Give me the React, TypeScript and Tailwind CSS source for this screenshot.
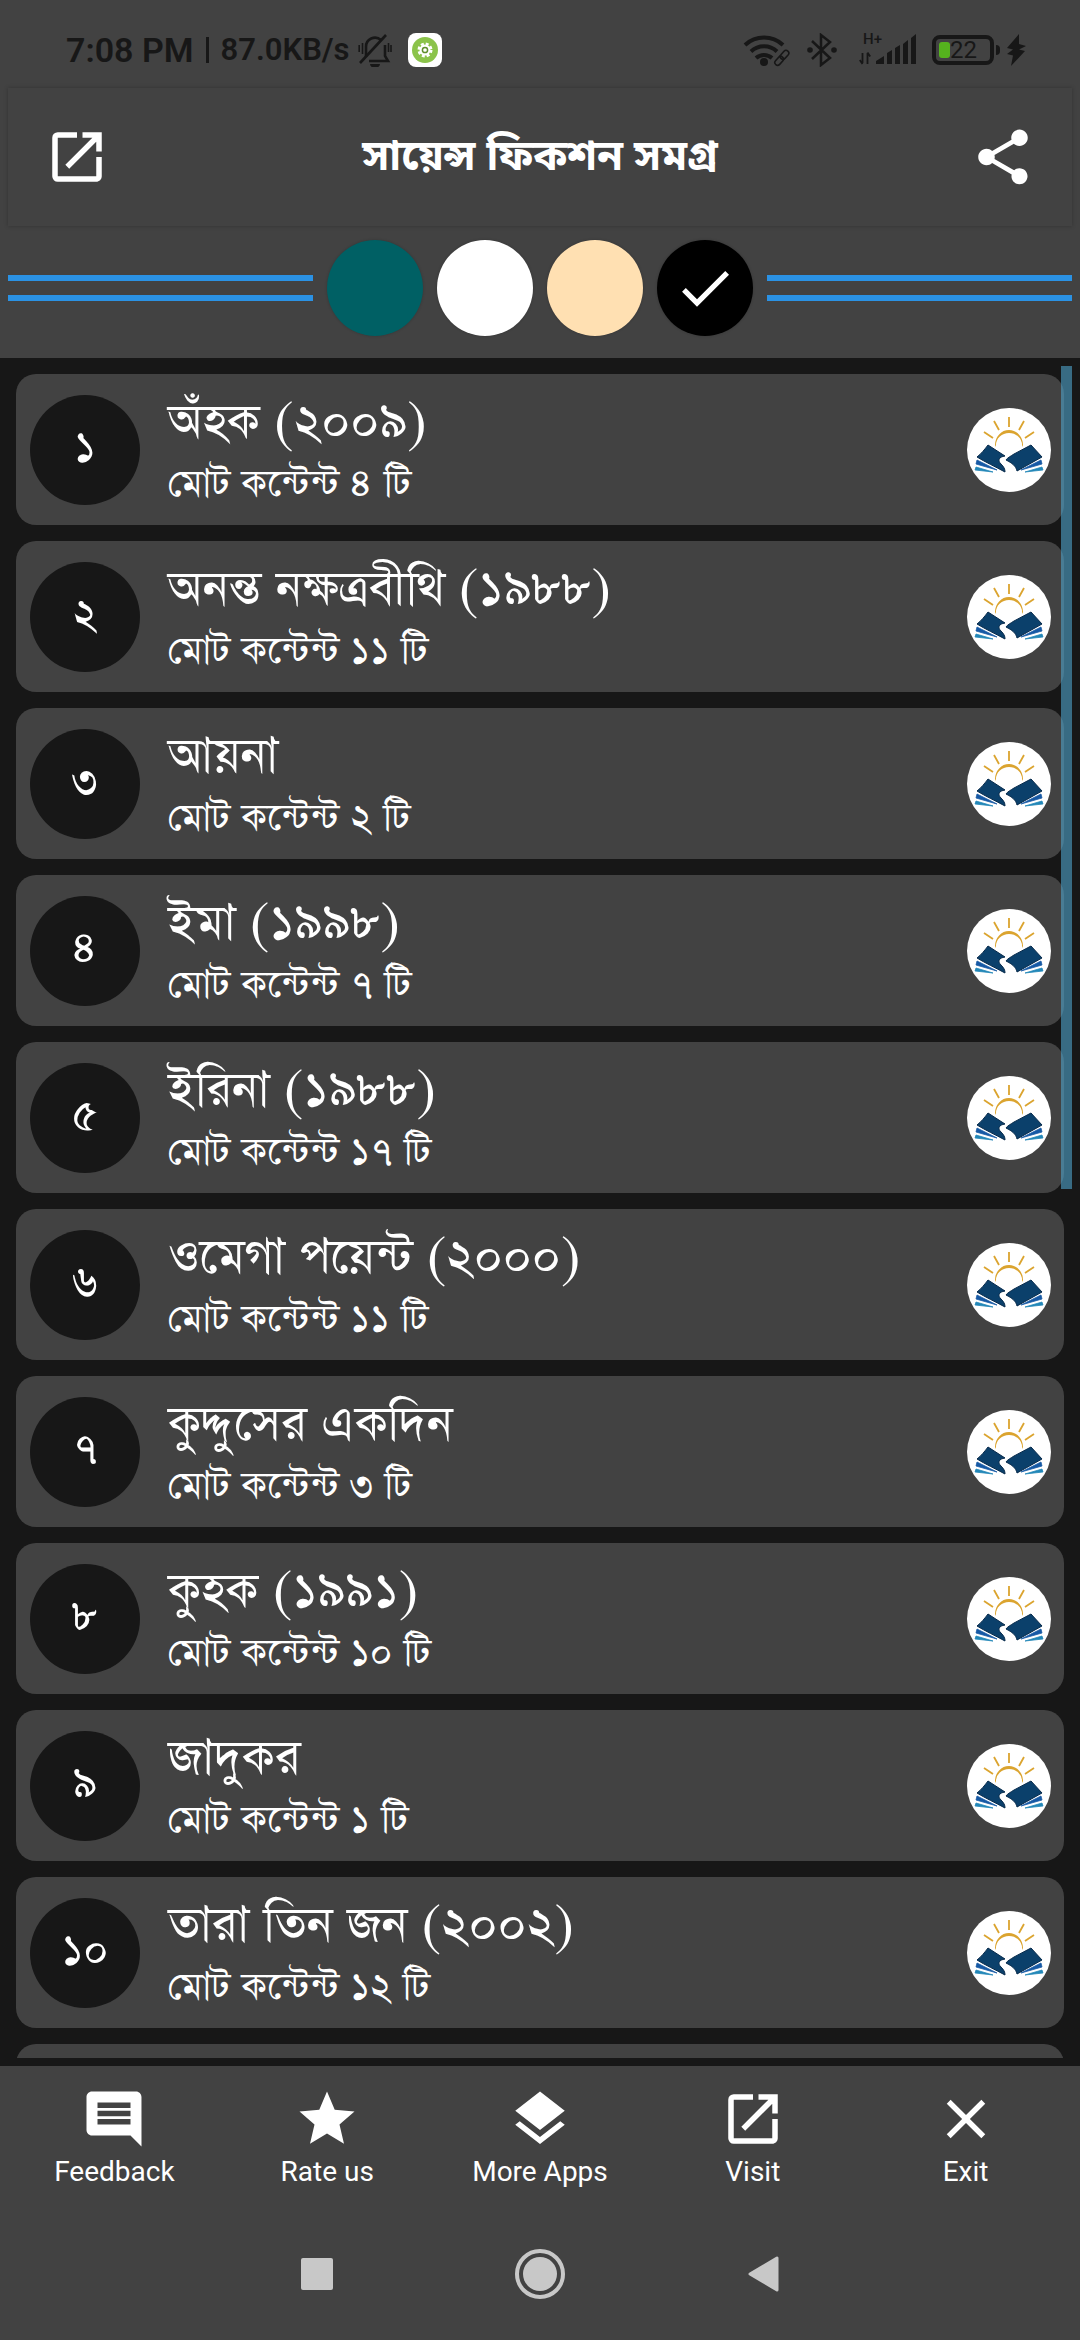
import React, { useState } from "react";
import {
  MdClose,
  MdComment,
  MdDone,
  MdLayers,
  MdOpenInNew,
  MdShare,
  MdStar,
} from "react-icons/md";

const books = [
  { no: "১", title: "অঁহক (২০০৯)", count: "৪" },
  { no: "২", title: "অনন্ত নক্ষত্রবীথি (১৯৮৮)", count: "১১" },
  { no: "৩", title: "আয়না", count: "২" },
  { no: "৪", title: "ইমা (১৯৯৮)", count: "৭" },
  { no: "৫", title: "ইরিনা (১৯৮৮)", count: "১৭" },
  { no: "৬", title: "ওমেগা পয়েন্ট (২০০০)", count: "১১" },
  { no: "৭", title: "কুদ্দুসের একদিন", count: "৩" },
  { no: "৮", title: "কুহক (১৯৯১)", count: "১০" },
  { no: "৯", title: "জাদুকর", count: "১" },
  { no: "১০", title: "তারা তিন জন (২০০২)", count: "১২" },
];

const themes = [
  { name: "Teal", color: "bg-[#006064]" },
  { name: "White", color: "bg-white" },
  { name: "Sepia", color: "bg-[#ffe0b2]" },
  { name: "Black", color: "bg-black" },
];

const actions = [
  { label: "Feedback", Icon: MdComment },
  { label: "Rate us", Icon: MdStar },
  { label: "More Apps", Icon: MdLayers },
  { label: "Visit", Icon: MdOpenInNew },
  { label: "Exit", Icon: MdClose },
];

const StatusBar = () => (
  <div className="flex h-[88px] items-center justify-between pt-3 pr-[54px] pl-[66px] font-['Roboto',sans-serif] text-[#171717]">
    <div className="flex items-center">
      <span className="text-[34px] font-semibold">7:08 PM</span>
      <span className="mx-3 h-[26px] w-[3px] bg-[#171717]" />
      <span className="text-[31px] font-semibold">87.0KB/s</span>
      <svg viewBox="0 0 34 34" className="ml-2 h-[34px] w-[34px]" fill="none" stroke="currentColor" strokeWidth="2.600">
        <path d="M8 24V14a9 9 0 0 1 15-7M27 12v11l3 5H11" />
        <path d="M2 30 28 2" />
        <path d="M12 31h10a5 4 0 0 1-10 0z" fill="currentColor" stroke="none" />
        <path d="M4.500 10v11M1.200 12v7M30.500 10v9M33 12v7" strokeWidth="1.600" />
      </svg>
      <svg viewBox="0 0 34 34" className="ml-4 h-[34px] w-[34px]">
        <rect width="34" height="34" rx="8" fill="#fff" />
        <circle cx="17" cy="17" r="13" fill="#8bc34a" />
        <circle cx="17" cy="17" r="5.500" fill="#fff" />
        <circle cx="17" cy="17" r="6.200" fill="none" stroke="#fff" strokeWidth="2.600" strokeDasharray="2.900 1.970" />
        <circle cx="17" cy="17" r="2.600" fill="#fff" stroke="#5f8f2c" strokeWidth="1.500" />
      </svg>
    </div>

    <div className="flex items-center">
      <svg viewBox="0 0 48 34" className="h-[34px] w-[48px]" fill="none" stroke="currentColor" strokeWidth="4">
        <path d="M2 12a28 28 0 0 1 38 0" />
        <path d="M8 18.500a19 19 0 0 1 26 0" />
        <path d="M13 25a12 12 0 0 1 16 0" />
        <circle cx="21" cy="29" r="4" fill="currentColor" stroke="none" />
        <g transform="rotate(-48 39 25)" strokeWidth="1.600">
          <rect x="30" y="22" width="10" height="5.500" rx="2.700" />
          <rect x="38" y="22" width="10" height="5.500" rx="2.700" />
        </g>
      </svg>
      <svg viewBox="0 0 30 34" className="ml-4 h-[34px] w-[30px]" fill="none" stroke="currentColor" strokeWidth="2.500">
        <path d="m5 8 18 17-9 7V2l9 7L5 26" />
        <circle cx="3" cy="17" r="2.800" fill="currentColor" stroke="none" />
        <circle cx="27" cy="17" r="2.800" fill="currentColor" stroke="none" />
      </svg>
      <div className="relative ml-[22px] h-[34px] w-[57px]">
        <span className="absolute top-0 left-1 text-[15px] leading-3 font-medium">H+</span>
        <svg viewBox="0 0 57 34" className="h-full w-full" fill="currentColor">
          <path d="M17 31v-3l8-5v8zM28 31V20l5-3v14zM36 31V15l5-3v19zM44 31V11l5-4v24zM52 31V5l5-4v30z" />
          <path d="M3.500 20v10M3.500 31 .8 27M8.500 31V20M8.500 19.500l2.700 4" fill="none" stroke="currentColor" strokeWidth="1.800" />
        </svg>
      </div>
      <div className="ml-4 flex h-[30px] w-[62px] items-center rounded-lg border-4 border-[#171717] pl-[3px]">
        <span className="h-4 w-[11px] rounded-[3px] bg-[#55b31e]" />
        <span className="text-[24px]">22</span>
      </div>
      <span className="ml-0.5 h-[10px] w-1 rounded-r bg-[#171717]" />
      <svg viewBox="0 0 20 32" className="ml-1.5 h-8 w-5" fill="currentColor">
        <path d="M13 0 1 14l6 1.500L1 20l6 1.500L5 32 19 17l-6-1.500L20 12l-7-2z" />
      </svg>
    </div>
  </div>
);

const BookLogo = () => (
  <svg viewBox="0 0 84 84" className="size-[84px] shrink-0" aria-hidden="true">
    <circle cx="42" cy="42" r="42" fill="#fff" />
    <g fill="none" stroke="#dba42f" strokeWidth="1.800">
      <path d="M42 9v10M27 13l5 9M57 13l-5 9M17 24l9 6M67 24l-9 6" />
    </g>
    <path d="M28 39v-2a14 15 0 0 1 28 0v2l-1-2a13 12 0 0 0-26 0z" fill="#dba42f" />
    <path d="M21 37 38 48c-6 1-8 4-4 8 3 3 4 5 4 8C29 59 18 54 10 49c4-3 8-8 11-12z" fill="#0b406b" stroke="#072a4b" />
    <path d="M64 37 75 49 50 63c-1-5-5-8-11-11 1-2 5-4 8-6z" fill="#0b406b" stroke="#072a4b" />
    <path d="m10 52 20 10-21-6zM74 52 54 62l21-6z" fill="#1659a5" stroke="#1659a5" strokeWidth="0.800" />
    <path d="m9 59 17 5-18-2zM75 59l-17 5 18-2z" fill="#2287b8" stroke="#2287b8" strokeWidth="0.800" />
  </svg>
);

const Lines = () => (
  <div className="flex flex-1 flex-col gap-[14px]">
    <span className="h-1.5 bg-[#2b92e4]" />
    <span className="h-1.5 bg-[#2b92e4]" />
  </div>
);

const App = () => {
  const [theme, setTheme] = useState("Black");

  return (
    <div className="flex h-screen flex-col bg-[#424242] text-white">
      <StatusBar />

      <header className="mx-2 flex h-[138px] items-center justify-between px-9 shadow-[0_0_4px_rgba(0,0,0,0.25)]">
        <button aria-label="Open">
          <MdOpenInNew className="size-[66px]" />
        </button>
        <h1 className="pt-1 font-['Noto_Sans_Bengali','Noto_Sans',sans-serif] text-[42px] font-bold">
          সায়েন্স ফিকশন সমগ্র
        </h1>
        <button aria-label="Share">
          <MdShare className="size-[66px]" />
        </button>
      </header>

      <div className="flex h-[132px] items-center gap-[14px] px-2 pb-2">
        <Lines />
        {themes.map(({ name, color }) => (
          <button
            key={name}
            aria-label={name}
            onClick={() => setTheme(name)}
            className={`grid size-24 place-items-center rounded-full shadow-[0_0_3px_rgba(0,0,0,0.2)] ${color}`}
          >
            {theme === name && <MdDone className="size-16" />}
          </button>
        ))}
        <Lines />
      </div>

      <main className="relative flex min-h-0 flex-1 flex-col bg-[#171717] py-2">
        <ul className="flex min-h-0 flex-1 flex-col gap-4 overflow-hidden px-4 pt-2 font-['FreeSerif','Noto_Serif_Bengali',serif]">
          {books.map(({ no, title, count }) => (
            <li
              key={no}
              className="flex h-[151px] shrink-0 items-center rounded-[20px] bg-[#424242] pr-[13px] pl-[14px]"
            >
              <span className="grid size-[110px] shrink-0 place-items-center rounded-full bg-[#171717] text-[50px]">
                {no}
              </span>
              <div className="ml-7 flex-1 pt-1">
                <h2 className="text-[58px] leading-[68px]">{title}</h2>
                <p className="text-[45px] leading-[56px]">মোট কন্টেন্ট {count} টি</p>
              </div>
              <BookLogo />
            </li>
          ))}
          <li className="h-[151px] shrink-0 rounded-[20px] bg-[#424242]" />
        </ul>
        <div className="absolute top-2 right-2 h-[823px] w-[11px] bg-[#4fa3cc]/60" />
      </main>

      <footer>
        <nav className="grid h-[142px] grid-cols-5 px-2 pt-5 font-['Roboto',sans-serif] text-[28px] leading-8">
          {actions.map(({ label, Icon }) => (
            <button key={label} className="flex flex-col items-center gap-1">
              <Icon className="size-[66px]" />
              {label}
            </button>
          ))}
        </nav>
        <div className="flex h-[132px] items-center justify-center gap-[182px] text-[#c8c8c8]">
          <button aria-label="Recents" className="size-8 rounded-xs bg-[#c8c8c8]" />
          <button aria-label="Home">
            <svg viewBox="0 0 50 50" className="size-[50px]">
              <circle cx="25" cy="25" r="23" fill="none" stroke="currentColor" strokeWidth="4" />
              <circle cx="25" cy="25" r="17" fill="currentColor" />
            </svg>
          </button>
          <button aria-label="Back">
            <svg viewBox="0 0 32 38" className="h-[38px] w-8">
              <path d="M3 19 30 3v32z" fill="currentColor" stroke="currentColor" strokeWidth="3" strokeLinejoin="round" />
            </svg>
          </button>
        </div>
      </footer>
    </div>
  );
};

export default App;
